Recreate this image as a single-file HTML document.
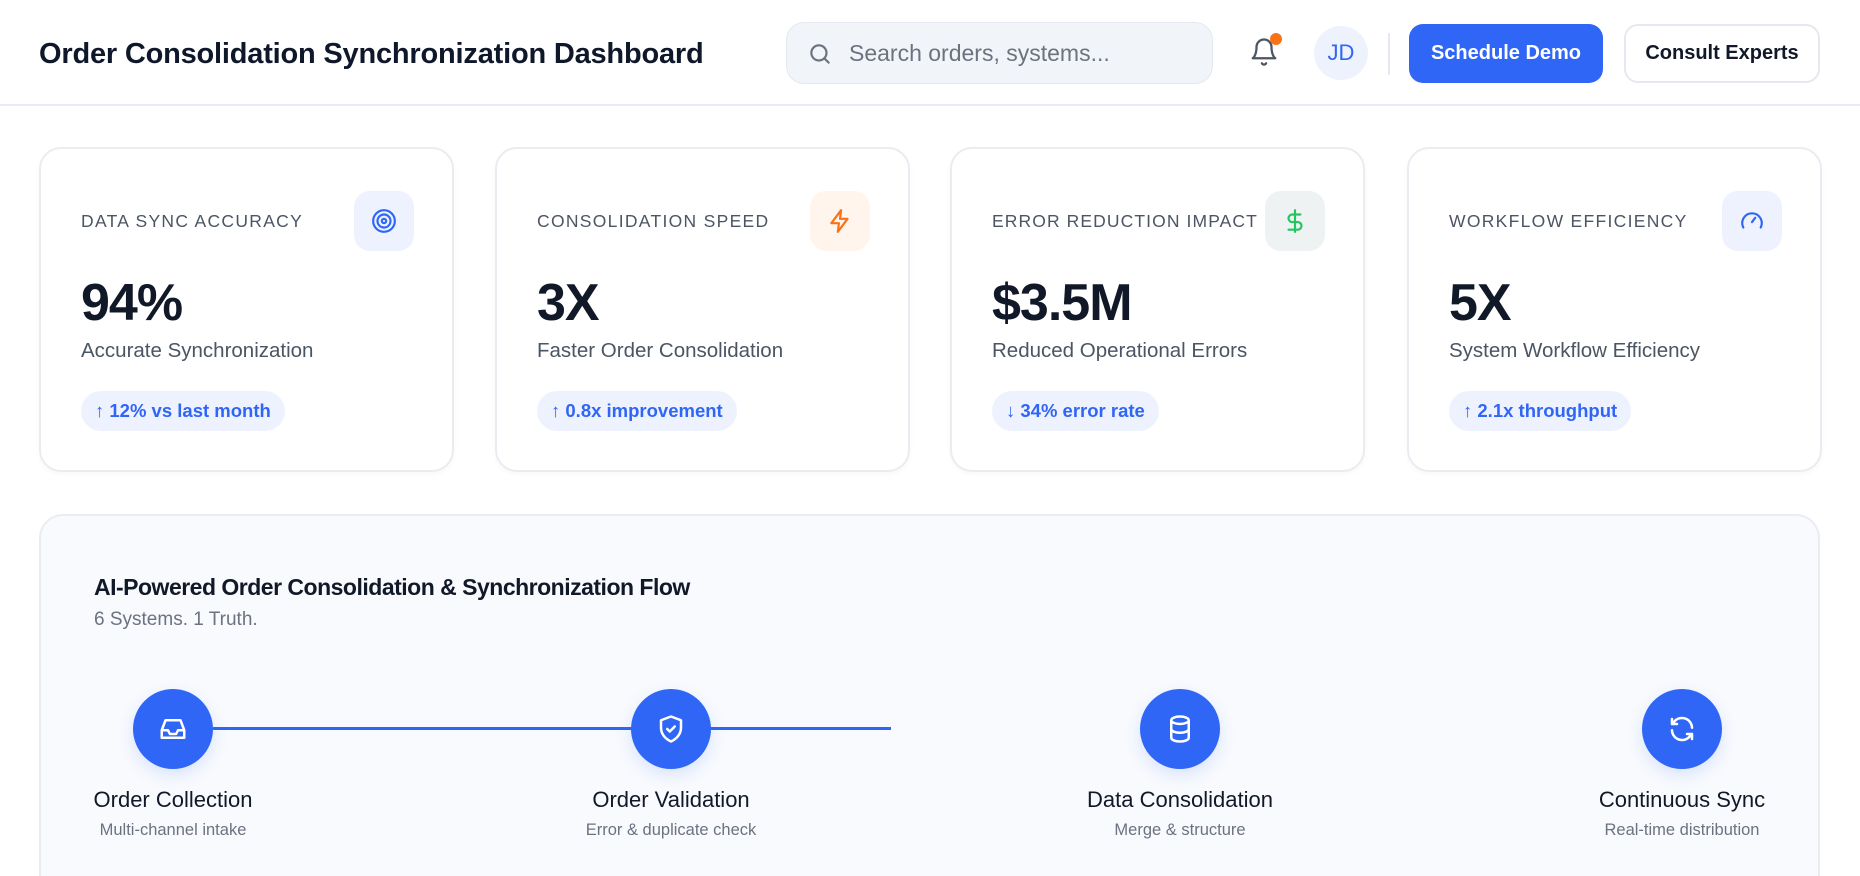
<!DOCTYPE html>
<html><head><meta charset="utf-8"><style>
*{box-sizing:border-box;margin:0;padding:0}
html{width:1860px;height:876px;overflow:hidden}
body{width:1860px;height:876px;overflow:hidden;background:#fff;font-family:"Liberation Sans",sans-serif;color:#111827;position:relative}
.abs{position:absolute}
.hdr{left:0;top:0;width:1860px;height:106px;border-bottom:2px solid #e8edf3;background:#fff}
.title{left:39px;top:38px;font-size:29px;font-weight:700;letter-spacing:-0.2px;color:#0f172a}
.search{left:786px;top:22px;width:427px;height:62px;border-radius:18px;background:#f1f4f8;border:1px solid #e5e9ef}
.search span{position:absolute;left:62px;top:17px;font-size:23px;color:#6b7280}
.btn1{left:1409px;top:24px;width:194px;height:59px;border-radius:14px;background:#2f66f6;color:#fff;font-size:20px;font-weight:600;text-align:center;line-height:59px}
.btn2{left:1624px;top:24px;width:196px;height:59px;border-radius:14px;background:#fff;border:2px solid #e5e9ef;color:#111827;font-size:20px;font-weight:600;text-align:center;line-height:55px}
.av{left:1314px;top:26px;width:54px;height:54px;border-radius:50%;background:#eef2fc;color:#2f66f6;font-size:22px;text-align:center;line-height:54px}
.card{top:147px;width:415px;height:325px;border:2px solid #e9edf2;border-radius:22px;background:#fff;box-shadow:0 2px 6px rgba(0,0,0,.03)}
.card .lab{position:absolute;left:40px;top:62px;font-size:17.5px;letter-spacing:1.3px;color:#4b5563}
.card .ic{position:absolute;left:313px;top:42px;width:60px;height:60px;border-radius:16px;display:flex;align-items:center;justify-content:center}
.card .val{position:absolute;left:40px;top:124px;font-size:52px;font-weight:700;letter-spacing:-1px;color:#111827}
.card .sub{position:absolute;left:40px;top:190px;font-size:20.5px;color:#4b5563}
.card .pill{position:absolute;left:40px;top:242px;height:40px;border-radius:20px;background:#eef2fe;color:#2f66f6;font-size:18.5px;font-weight:600;line-height:40px;padding:0 14px}
.panel{left:39px;top:514px;width:1781px;height:362px;border:2px solid #e9edf2;border-bottom:none;border-radius:24px 24px 0 0;background:#f8fafd}
.ptitle{left:94px;top:574px;font-size:23px;font-weight:700;letter-spacing:-0.5px;color:#111827}
.psub{left:94px;top:609px;font-size:19px;color:#6b7280}
.line{left:213px;top:727px;width:678px;height:3px;background:#2f66f6}
.circ{top:689px;width:80px;height:80px;border-radius:50%;background:#2f66f6;display:flex;align-items:center;justify-content:center;box-shadow:0 6px 16px rgba(47,102,246,.15)}
.sl{top:787px;width:300px;text-align:center;font-size:22px;font-weight:500;color:#111827}
.ss{top:821px;width:300px;text-align:center;font-size:16.5px;color:#6b7280}
</style></head><body>
<div class="abs hdr"></div>
<div class="abs title">Order Consolidation Synchronization Dashboard</div>
<div class="abs search"><svg style="position:absolute;left:20px;top:18px" width="26" height="26" viewBox="0 0 24 24" fill="none" stroke="#6b7280" stroke-width="2" stroke-linecap="round"><circle cx="11" cy="11" r="7"/><path d="M20 20l-4-4"/></svg><span>Search orders, systems...</span></div>
<svg class="abs" style="left:1249px;top:36px" width="30" height="32" viewBox="0 0 24 24" fill="none" stroke="#4b5563" stroke-width="1.8" stroke-linecap="round" stroke-linejoin="round"><path d="M6 8a6 6 0 0 1 12 0c0 7 3 9 3 9H3s3-2 3-9"/><path d="M10.3 21a1.9 1.9 0 0 0 3.4 0"/></svg>
<div class="abs" style="left:1270px;top:33px;width:12px;height:12px;border-radius:50%;background:#f97316"></div>
<div class="abs av">JD</div>
<div class="abs" style="left:1388px;top:33px;width:2px;height:42px;background:#e5e9ef"></div>
<div class="abs btn1">Schedule Demo</div>
<div class="abs btn2">Consult Experts</div>

<div class="abs card" style="left:39px"><div class="lab">DATA SYNC ACCURACY</div><div class="ic" style="background:#eef2fe"><svg width="26" height="26" viewBox="0 0 24 24" fill="none" stroke="#2f66f6" stroke-width="2"><circle cx="12" cy="12" r="10"/><circle cx="12" cy="12" r="6"/><circle cx="12" cy="12" r="2"/></svg></div><div class="val">94%</div><div class="sub">Accurate Synchronization</div><div class="pill">↑ 12% vs last month</div></div>
<div class="abs card" style="left:495px"><div class="lab">CONSOLIDATION SPEED</div><div class="ic" style="background:#fff5ec"><svg width="26" height="26" viewBox="0 0 24 24" fill="none" stroke="#f97316" stroke-width="2" stroke-linejoin="round"><path d="M13 2L4 14h7l-1 8 9-12h-7z"/></svg></div><div class="val">3X</div><div class="sub">Faster Order Consolidation</div><div class="pill">↑ 0.8x improvement</div></div>
<div class="abs card" style="left:950px"><div class="lab" style="letter-spacing:1.1px">ERROR REDUCTION IMPACT</div><div class="ic" style="left:313px;background:#eef2f3"><svg width="26" height="28" viewBox="0 0 24 24" fill="none" stroke="#22c55e" stroke-width="2" stroke-linecap="round"><path d="M12 2v20M17 6H9.5a3.5 3.5 0 0 0 0 7h5a3.5 3.5 0 0 1 0 7H6"/></svg></div><div class="val">$3.5M</div><div class="sub">Reduced Operational Errors</div><div class="pill">↓ 34% error rate</div></div>
<div class="abs card" style="left:1407px"><div class="lab">WORKFLOW EFFICIENCY</div><div class="ic" style="background:#eef2fe"><svg width="26" height="26" viewBox="0 0 24 24" fill="none" stroke="#2f66f6" stroke-width="2" stroke-linecap="round"><path d="M4 18a9 9 0 1 1 16 0"/><path d="M12 13l3-4"/></svg></div><div class="val">5X</div><div class="sub">System Workflow Efficiency</div><div class="pill">↑ 2.1x throughput</div></div>

<div class="abs panel"></div>
<div class="abs ptitle">AI-Powered Order Consolidation &amp; Synchronization Flow</div>
<div class="abs psub">6 Systems. 1 Truth.</div>
<div class="abs line"></div>
<div class="abs circ" style="left:133px"><svg width="30" height="30" viewBox="0 0 24 24" fill="none" stroke="#fff" stroke-width="2" stroke-linejoin="round"><path d="M3 13l3-8h12l3 8v6H3z"/><path d="M3 13h5l1.5 3h5l1.5-3h5"/></svg></div>
<div class="abs circ" style="left:631px"><svg width="30" height="30" viewBox="0 0 24 24" fill="none" stroke="#fff" stroke-width="2" stroke-linejoin="round" stroke-linecap="round"><path d="M12 2l8 3v6c0 5-3.5 9-8 11-4.5-2-8-6-8-11V5z"/><path d="M9 12l2 2 4-4"/></svg></div>
<div class="abs circ" style="left:1140px"><svg width="30" height="30" viewBox="0 0 24 24" fill="none" stroke="#fff" stroke-width="2"><ellipse cx="12" cy="5" rx="7" ry="3"/><path d="M5 5v14c0 1.7 3.1 3 7 3s7-1.3 7-3V5M5 12c0 1.7 3.1 3 7 3s7-1.3 7-3"/></svg></div>
<div class="abs circ" style="left:1642px"><svg width="30" height="30" viewBox="0 0 24 24" fill="none" stroke="#fff" stroke-width="2" stroke-linecap="round" stroke-linejoin="round"><path d="M20 11a8 8 0 0 0-14.5-4.5L4 8M4 4v4h4M4 13a8 8 0 0 0 14.5 4.5L20 16M20 20v-4h-4"/></svg></div>
<div class="abs sl" style="left:23px">Order Collection</div><div class="abs ss" style="left:23px">Multi-channel intake</div>
<div class="abs sl" style="left:521px">Order Validation</div><div class="abs ss" style="left:521px">Error &amp; duplicate check</div>
<div class="abs sl" style="left:1030px">Data Consolidation</div><div class="abs ss" style="left:1030px">Merge &amp; structure</div>
<div class="abs sl" style="left:1532px">Continuous Sync</div><div class="abs ss" style="left:1532px">Real-time distribution</div>
</body></html>
